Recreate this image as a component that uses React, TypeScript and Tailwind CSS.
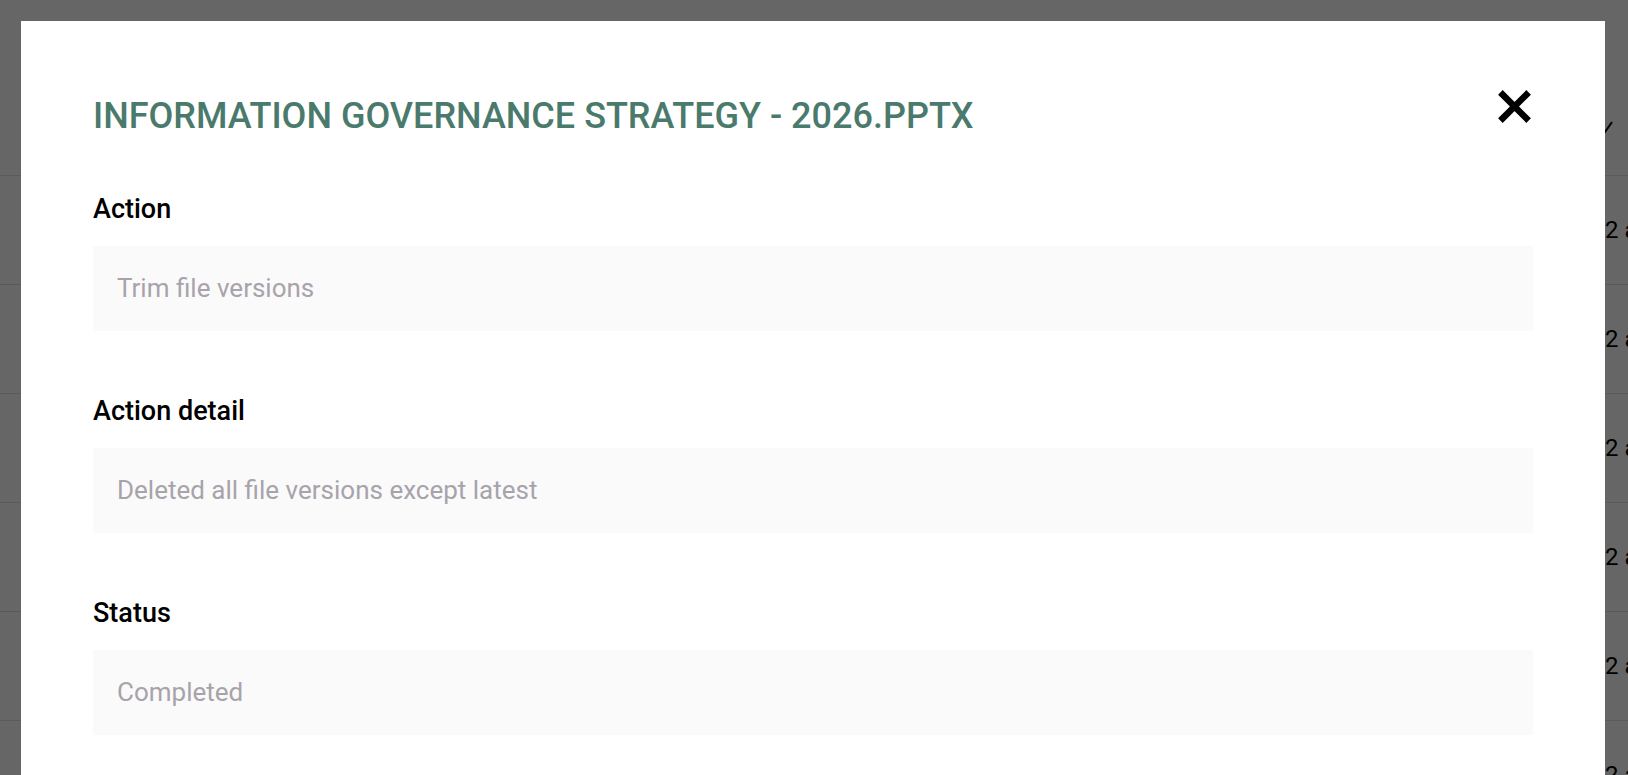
import React from "react";

const fields = [
  { label: "Action", value: "Trim file versions" },
  { label: "Action detail", value: "Deleted all file versions except latest" },
  { label: "Status", value: "Completed" },
];

const CloseIcon = () => (
  <svg width="33" height="33" viewBox="0 0 33 33" className="block">
    <path d="M2.4 2.4 L30.6 30.6 M30.6 2.4 L2.4 30.6" stroke="#000" strokeWidth="6.5" fill="none" />
  </svg>
);

const BackgroundTable = () => {
  return (
    <div className="flex flex-col">
      <div className="h-[176px] border-b border-[#e0e0e0] pl-[1597px] pt-[121px]">
        <svg width="16" height="12" viewBox="0 0 16 12" className="block">
          <polyline points="1,1 8,11 15,1" stroke="#000" strokeWidth="2" fill="none" />
        </svg>
      </div>
      {[0, 1, 2, 3, 4, 5].map((i) => (
        <div key={i} className="h-[109px] shrink-0 border-b border-[#e0e0e0] flex items-center">
          <div className="w-[1605px] shrink-0" />
          <span className="text-[24px] text-black whitespace-nowrap">2 am</span>
        </div>
      ))}
    </div>
  );
};

export default function App() {
  return (
    <div
      className="relative w-full h-[775px] overflow-hidden bg-white"
      style={{ fontFamily: "Roboto, 'Noto Sans', sans-serif" }}
    >
      <BackgroundTable />
      <div className="absolute inset-0 bg-black/60" />
      <div className="absolute left-[21px] top-[21px] w-[1584px] h-[900px] bg-white px-[72px] pt-[72px]">
        <div className="flex justify-between items-start">
          <h2 className="mt-[2px] text-[36px] leading-[43px] font-medium uppercase text-[#4a7a6c]">
            Information Governance Strategy - 2026.pptx
          </h2>
          <button className="-mt-[3px] mr-[2px]">
            <CloseIcon />
          </button>
        </div>
        <div className="mt-[52px] flex flex-col gap-[61px]">
          {fields.map((f) => (
            <div key={f.label}>
              <p className="text-[27px] leading-[39px] font-medium text-black mb-[17px]">{f.label}</p>
              <div className="h-[85px] bg-[#fafafa] px-[24px] flex items-center">
                <span className="text-[26px] text-[#a8a3ab]">{f.value}</span>
              </div>
            </div>
          ))}
        </div>
      </div>
    </div>
  );
}
